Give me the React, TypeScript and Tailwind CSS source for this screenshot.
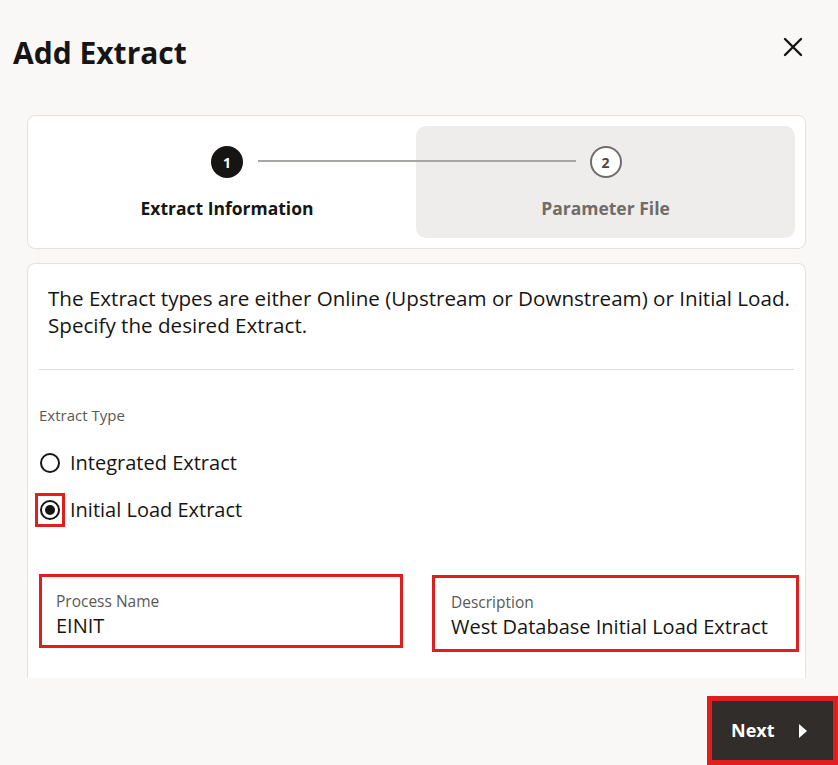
import React from "react";

export default function App() {
  return (
    <div
      className="w-[838px] h-[765px] bg-[#f9f8f6] relative overflow-hidden text-[#161513]"
      style={{ fontFamily: '"Open Sans", "Noto Sans", sans-serif' }}
    >
      {/* Header */}
      <div className="flex items-center justify-between pl-[13px] pr-[35px] pt-[31px] h-[84px]">
        <h1 className="text-[30px] font-bold leading-none -mt-[10px]">Add Extract</h1>
        <svg width="20" height="20" viewBox="0 0 20 20" className="-mt-[22px]">
          <path d="M2 2 L18 18 M18 2 L2 18" stroke="#161513" strokeWidth="2.4" strokeLinecap="round" />
        </svg>
      </div>

      {/* Stepper card */}
      <div className="ml-[27px] w-[779px] mt-[31px] h-[134px] bg-white border border-[#e4e2df] rounded-[8px] pl-[10px] pr-[10px] py-[10px] flex">
        <div className="flex-1">
          <div className="flex flex-col items-center pt-[20px]">
            <div className="w-[32px] h-[32px] rounded-full bg-[#161513] text-white flex items-center justify-center text-[14px] font-bold">1</div>
            <div className="mt-[22px] text-[17.5px] font-bold leading-none">Extract Information</div>
          </div>
        </div>
        <div className="w-[379px] bg-[#eeedeb] rounded-[10px]">
          <div className="flex flex-col items-center pt-[20px]">
            <div className="w-[32px] h-[32px] rounded-full bg-white border-2 border-[#6f6c69] text-[#4a4744] flex items-center justify-center text-[14px] font-bold">2</div>
            <div className="mt-[22px] text-[17.5px] font-bold leading-none text-[#6f6c69]">Parameter File</div>
          </div>
        </div>
      </div>
      {/* connector line */}
      <div className="absolute left-[258px] top-[160px] w-[318px] h-[2px] bg-[#a9a7a4]" />

      {/* Form card */}
      <div className="ml-[27px] w-[779px] mt-[14px] h-[415px] bg-white border border-[#e4e2df] border-b-0 rounded-t-[8px] px-[11px]">
        <p className="pt-[21px] px-[9px] text-[20.6px] leading-[27px] text-[#161513] whitespace-nowrap">
          The Extract types are either Online (Upstream or Downstream) or Initial Load.
          <br />
          Specify the desired Extract.
        </p>
        <div className="mt-[30px] h-px bg-[#dedcd9]" />
        <div className="mt-[38px] text-[15px] leading-none text-[#5b5855]">Extract Type</div>

        <div className="mt-[25px] flex items-center gap-[9px] h-[30px]">
          <div className="w-[22px] h-[22px] flex items-center justify-center">
            <div className="w-[20px] h-[20px] rounded-full border-2 border-[#161513] bg-white" />
          </div>
          <span className="text-[20px]">Integrated Extract</span>
        </div>
        <div className="mt-[15px] flex items-center gap-[5px] h-[34px] -ml-[4px]">
          <div className="w-[30px] h-[34px] border-[3px] border-[#e01e1e] flex items-center justify-center">
            <div className="w-[20px] h-[20px] rounded-full border-2 border-[#161513] bg-white flex items-center justify-center">
              <div className="w-[10px] h-[10px] rounded-full bg-[#161513]" />
            </div>
          </div>
          <span className="text-[20px]">Initial Load Extract</span>
        </div>

        <div className="mt-[47px] flex items-start gap-[29px]">
          <div className="shrink-0 w-[364px] h-[74px] border-[3px] border-[#e01e1e] bg-white px-[14px] pt-[15px]">
            <div className="text-[15.5px] leading-[18px] text-[#5b5855]">Process Name</div>
            <div className="mt-[4px] text-[20px] leading-[24px]">EINIT</div>
          </div>
          <div className="shrink-0 mt-[1px] w-[367px] h-[77px] border-[3px] border-[#e01e1e] bg-white px-[16px] pt-[15px]">
            <div className="text-[15.5px] leading-[18px] text-[#5b5855]">Description</div>
            <div className="mt-[4px] text-[20px] leading-[24px] whitespace-nowrap">West Database Initial Load Extract</div>
          </div>
        </div>
      </div>

      {/* Next button */}
      <div className="absolute left-[707px] top-[696px] w-[131px] h-[69px] border-[5px] border-[#e01e1e]">
        <div className="w-full h-full bg-[#302d2b] flex items-center justify-between pl-[19px] pr-[25px]">
          <span className="text-white text-[18px] font-bold">Next</span>
          <svg width="10" height="16" viewBox="0 0 10 16">
            <path d="M1 1 L9 8 L1 15 Z" fill="white" />
          </svg>
        </div>
      </div>
    </div>
  );
}
